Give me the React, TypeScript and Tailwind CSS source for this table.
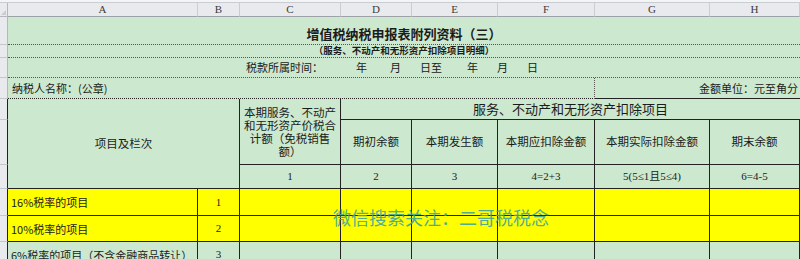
import React from 'react';

const cjk = { fontFamily: '"Noto Sans CJK SC", "Liberation Sans", sans-serif' };
const num = { fontFamily: '"Liberation Serif", "Noto Sans CJK SC", serif' };

const letters = ['A', 'B', 'C', 'D', 'E', 'F', 'G', 'H'];

// grey row header on the far left
function RowHead({ dark = false }: { dark?: boolean }) {
  return (
    <div
      className={`bg-[#e8eaed] border-b border-b-[#c4c7cc] border-r ${
        dark ? 'border-r-[#222]' : 'border-r-[#b4b7bc]'
      }`}
    />
  );
}

export default function App() {
  return (
    <div className="relative w-[800px] h-[259px] overflow-hidden bg-[#cce8cf] text-[#1b1b1b]" style={cjk}>
      <div className="h-[3px] bg-[#f3f4f5] border-b border-[#c9ccd0]" />
      <div className="grid grid-cols-[8px_190px_42px_101px_71px_86px_97px_115px_90px] grid-rows-[14px_28px_13px_20px_21px_21px_45px_24px_27px_26px_26px]">
        {/* column letters */}
        <div className="relative bg-[#e8eaed] border-r border-b border-[#b4b7bc]">
          <div className="absolute right-[1px] bottom-[1px] w-0 h-0 border-l-[5px] border-l-transparent border-b-[5px] border-b-[#c9ccd0]" />
        </div>
        {letters.map((l) => (
          <div
            key={l}
            className="bg-[#e8eaed] border-r border-r-[#c9ccd0] border-b border-b-[#9ea2a8] flex items-center justify-center text-[11px] text-[#3c3c3c] leading-none"
            style={num}
          >
            {l}
          </div>
        ))}

        {/* title */}
        <RowHead />
        <div className="col-span-8 border-b border-dotted border-[#555] flex items-center justify-center pt-[5px]">
          <span className="text-[13px] font-bold leading-none">增值税纳税申报表附列资料（三）</span>
        </div>

        {/* subtitle */}
        <RowHead />
        <div className="col-span-8 border-b border-dotted border-[#555] flex items-center justify-center">
          <span className="text-[9.5px] font-bold leading-none">（服务、不动产和无形资产扣除项目明细）</span>
        </div>

        {/* period */}
        <RowHead />
        <div className="col-span-8 border-b border-dotted border-[#555] flex items-center pl-[238px] text-[11px] leading-none">
          <span>税款所属时间：</span>
          <span className="ml-[33px]">年</span>
          <span className="ml-[23px]">月</span>
          <span className="ml-[19px]">日至</span>
          <span className="ml-[25px]">年</span>
          <span className="ml-[19px]">月</span>
          <span className="ml-[19px]">日</span>
        </div>

        {/* taxpayer */}
        <RowHead />
        <div className="col-span-6 border-r border-dotted border-r-[#555] border-b border-b-[#222] border-b-solid flex items-center pl-[4px] text-[11px] leading-none">
          纳税人名称：(公章)
        </div>
        <div className="col-span-2 border-b border-[#222] flex items-center justify-end pr-[2px] text-[11px] leading-none">
          金额单位：元至角分
        </div>

        {/* table header */}
        <RowHead dark />
        <div className="col-span-2 row-span-3 border-r border-b border-[#222] flex items-center justify-center text-[11.5px]">
          项目及栏次
        </div>
        <div className="row-span-2 border-r border-b border-[#222] flex items-center justify-center text-center text-[11.5px] leading-[13px]">
          <div>
            本期服务、不动产
            <br />
            和无形资产价税合
            <br />
            计额（免税销售
            <br />
            额）
          </div>
        </div>
        <div className="col-span-5 border-b border-[#222] flex items-center justify-center text-[13px]">
          服务、不动产和无形资产扣除项目
        </div>

        <RowHead dark />
        {['期初余额', '本期发生额', '本期应扣除金额', '本期实际扣除金额', '期末余额'].map((t) => (
          <div key={t} className="border-r border-b border-[#222] flex items-center justify-center text-[11.5px]">
            {t}
          </div>
        ))}

        <RowHead dark />
        {['1', '2', '3', '4=2+3', '5(5≤1且5≤4)', '6=4-5'].map((t) => (
          <div key={t} className="border-r border-b border-[#222] flex items-center justify-center text-[11px]" style={num}>
            {t}
          </div>
        ))}

        {/* rows */}
        {[
          { name: '16%税率的项目', n: '1', bg: 'bg-[#ffff00]' },
          { name: '10%税率的项目', n: '2', bg: 'bg-[#ffff00]' },
          { name: '6%税率的项目（不含金融商品转让）', n: '3', bg: '' },
        ].map((r) => (
          <React.Fragment key={r.n}>
            <RowHead dark />
            <div className={`${r.bg} border-r border-b border-[#222] flex items-center pl-[3px] text-[11px] whitespace-nowrap overflow-hidden`}>
              <span className="pt-[1px]">{r.name}</span>
            </div>
            <div className={`${r.bg} border-r border-b border-[#222] flex items-center justify-center text-[11px]`} style={num}>
              {r.n}
            </div>
            {[0, 1, 2, 3, 4, 5].map((i) => (
              <div key={i} className={`${r.bg} border-r border-b border-[#222]`} />
            ))}
          </React.Fragment>
        ))}
      </div>

      {/* watermark */}
      <div className="absolute left-[333px] top-[206px] text-[18px] leading-[22px] text-[#3fa69c] opacity-90 whitespace-nowrap pointer-events-none">
        微信搜索关注：二哥税税念
      </div>
    </div>
  );
}
